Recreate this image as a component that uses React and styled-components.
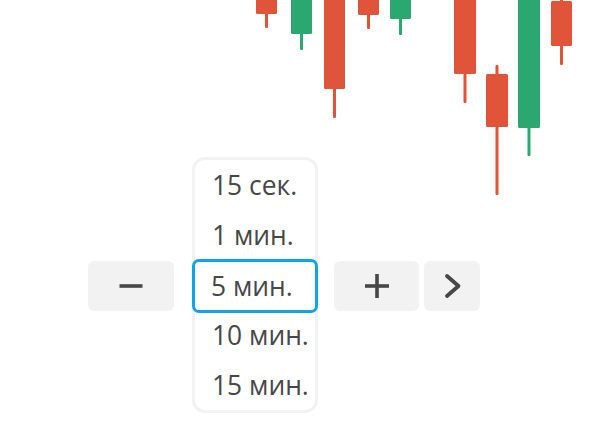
import React from "react";
import styled, { createGlobalStyle } from "styled-components";

const Global = createGlobalStyle`
  html, body { margin: 0; padding: 0; background: #ffffff; }
  body { font-family: "Open Sans", "Noto Sans", sans-serif; }
`;

const Page = styled.div`
  width: 600px;
  height: 448px;
  overflow: hidden;
  display: grid;
  grid-template-areas: "stack";
  background: #ffffff;
`;

const ChartLayer = styled.svg`
  grid-area: stack;
  display: block;
  width: 600px;
  height: 200px;
`;

const Controls = styled.div`
  grid-area: stack;
  display: flex;
  align-items: center;
  padding: 157px 0 0 88px;
  align-self: start;
`;

const StepButton = styled.button`
  width: ${(p) => p.$w}px;
  height: 50px;
  margin-left: ${(p) => p.$gap || 0}px;
  margin-top: 2px;
  border: none;
  border-radius: 6px;
  background: #f2f2f2;
  display: flex;
  align-items: center;
  justify-content: center;
  padding: 0;
  color: #474747;
  cursor: pointer;
`;

const Picker = styled.div`
  margin-left: 18px;
  width: 126px;
  box-sizing: border-box;
  border: 3px solid #f2f2f2;
  border-radius: 13px;
  display: flex;
  flex-direction: column;
  background: #ffffff;
`;

const Item = styled.div`
  height: 50px;
  box-sizing: border-box;
  display: flex;
  align-items: center;
  padding-left: 17px;
  font-size: 26.4px;
  color: #474747;
  white-space: nowrap;
`;

const SelectedItem = styled(Item)`
  height: 54px;
  margin: -1px -3px -3px;
  padding-left: 16px;
  border: 3.6px solid #0fa2f1;
  border-radius: 7px;
  background: #ffffff;
  position: relative;
  z-index: 1;
`;

const candles = [
  { x: 256, w: 21, top: -6, bottom: 14, wt: -6, wb: 28, up: false },
  { x: 291, w: 21, top: -6, bottom: 34, wt: -6, wb: 50, up: true },
  { x: 324, w: 21, top: -6, bottom: 89, wt: -6, wb: 118, up: false },
  { x: 358, w: 21, top: -6, bottom: 15, wt: -6, wb: 29, up: false },
  { x: 390, w: 21, top: -6, bottom: 19, wt: -6, wb: 35, up: true },
  { x: 454, w: 22, top: -6, bottom: 74, wt: -6, wb: 103, up: false },
  { x: 486, w: 22, top: 74, bottom: 127, wt: 65, wb: 195, up: false },
  { x: 518, w: 22, top: -6, bottom: 128, wt: -6, wb: 156, up: true },
  { x: 551, w: 21, top: 1, bottom: 46, wt: -6, wb: 65, up: false },
];

const RED = "#e0553a";
const GREEN = "#2aa870";

function Chart() {
  return (
    <ChartLayer viewBox="0 0 600 200">
      {candles.map((c, i) => {
        const color = c.up ? GREEN : RED;
        const cx = c.x + c.w / 2;
        return (
          <g key={i} fill={color}>
            <rect x={cx - 1.5} y={c.wt} width={3} height={c.wb - c.wt} rx={1} />
            <rect x={c.x} y={c.top} width={c.w} height={c.bottom - c.top} rx={1.5} />
          </g>
        );
      })}
    </ChartLayer>
  );
}

const MinusIcon = () => (
  <svg width="24" height="24" viewBox="0 0 24 24">
    <rect x="0.5" y="10.2" width="23" height="3.6" fill="#474747" />
  </svg>
);

const PlusIcon = () => (
  <svg width="24" height="24" viewBox="0 0 24 24">
    <rect x="0" y="10.2" width="24" height="3.6" fill="#474747" />
    <rect x="10.2" y="0" width="3.6" height="24" fill="#474747" />
  </svg>
);

const ChevronIcon = () => (
  <svg width="24" height="28" viewBox="0 0 24 28">
    <path
      d="M7 4 L18.5 14 L7 24"
      fill="none"
      stroke="#474747"
      strokeWidth="3.8"
      strokeLinecap="round"
      strokeLinejoin="round"
    />
  </svg>
);

const options = ["15 сек.", "1 мин.", "5 мин.", "10 мин.", "15 мин."];
const selected = 2;

export default function App() {
  return (
    <>
      <Global />
      <Page>
        <Chart />
        <Controls>
          <StepButton $w={86} aria-label="minus">
            <MinusIcon />
          </StepButton>
          <Picker>
            {options.map((o, i) =>
              i === selected ? (
                <SelectedItem key={o}>{o}</SelectedItem>
              ) : (
                <Item key={o}>{o}</Item>
              )
            )}
          </Picker>
          <StepButton $w={85} $gap={16} aria-label="plus">
            <PlusIcon />
          </StepButton>
          <StepButton $w={56} $gap={5} aria-label="next">
            <ChevronIcon />
          </StepButton>
        </Controls>
      </Page>
    </>
  );
}
